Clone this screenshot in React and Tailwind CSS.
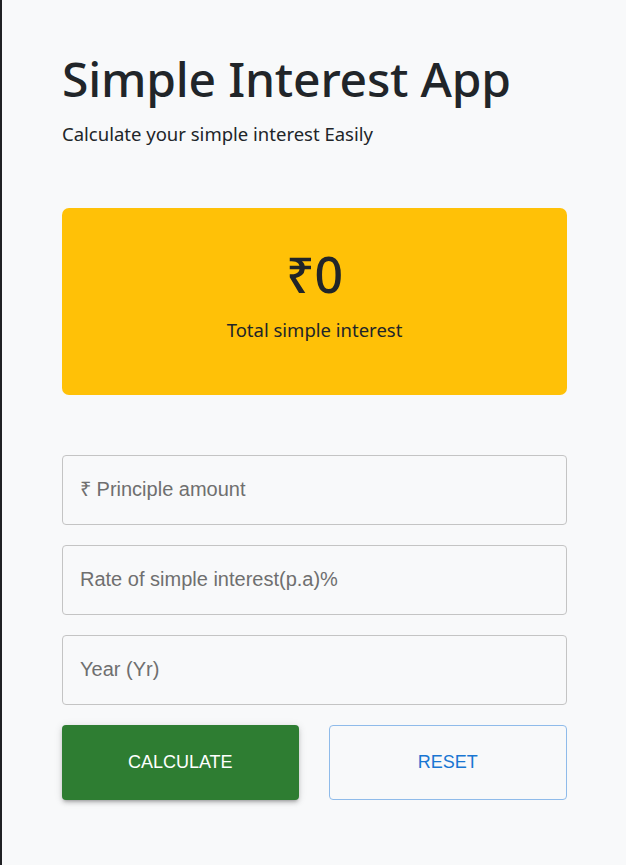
import { useState } from "react";

export default function App() {
  const [principle, setPrinciple] = useState("");
  const [rate, setRate] = useState("");
  const [year, setYear] = useState("");
  const [interest, setInterest] = useState(0);

  const calculate = () => {
    setInterest((Number(principle) * Number(rate) * Number(year)) / 100);
  };

  const reset = () => {
    setPrinciple("");
    setRate("");
    setYear("");
    setInterest(0);
  };

  return (
    <div className="min-h-[865px] bg-[#f8f9fa] border-l-2 border-[#202124] font-['Noto_Sans',sans-serif] text-[#212529]">
      <div className="pl-[60px] pr-[59px] pt-[50px]">
        {/* Heading */}
        <h1 className="text-[48px] leading-[1.2] font-medium tracking-[-0.2px]">
          Simple Interest App
        </h1>
        <p className="text-[18.5px] leading-[27px] mt-[12px]">
          Calculate your simple interest Easily
        </p>

        {/* Result card */}
        <div className="mt-[61px] h-[187px] rounded-[7px] bg-[#ffc107] flex flex-col items-center justify-center">
          <h2 className="text-[50px] font-medium leading-none mt-[-10px]">
            ₹{interest}
          </h2>
          <p className="text-[18.5px] mt-[17px]">Total simple interest</p>
        </div>

        {/* Form */}
        <form
          className="mt-[60px] flex flex-col gap-[20px] font-['Liberation_Sans',Arial,sans-serif]"
          onSubmit={(e) => e.preventDefault()}
        >
          <input
            value={principle}
            onChange={(e) => setPrinciple(e.target.value)}
            placeholder="₹ Principle amount"
            className="h-[70px] rounded-[4px] border border-[#c4c4c4] bg-transparent px-[17px] text-[20px] text-[#212529] placeholder:text-[#6f6f6f] outline-none"
          />
          <input
            value={rate}
            onChange={(e) => setRate(e.target.value)}
            placeholder="Rate of simple interest(p.a)%"
            className="h-[70px] rounded-[4px] border border-[#c4c4c4] bg-transparent px-[17px] text-[20px] text-[#212529] placeholder:text-[#6f6f6f] outline-none"
          />
          <input
            value={year}
            onChange={(e) => setYear(e.target.value)}
            placeholder="Year (Yr)"
            className="h-[70px] rounded-[4px] border border-[#c4c4c4] bg-transparent px-[17px] text-[20px] text-[#212529] placeholder:text-[#6f6f6f] outline-none"
          />
          <div className="flex gap-[30px]">
            <button
              type="button"
              onClick={calculate}
              className="flex-1 h-[75px] rounded-[4px] bg-[#2e7d32] text-white text-[18px] uppercase shadow-[0_3px_3px_-2px_rgba(0,0,0,0.2),0_3px_4px_0_rgba(0,0,0,0.14),0_1px_8px_0_rgba(0,0,0,0.12)]"
            >
              Calculate
            </button>
            <button
              type="button"
              onClick={reset}
              className="flex-1 h-[75px] rounded-[4px] border border-[#8fbbea] text-[#1976d2] text-[18px] uppercase"
            >
              Reset
            </button>
          </div>
        </form>
      </div>
    </div>
  );
}
